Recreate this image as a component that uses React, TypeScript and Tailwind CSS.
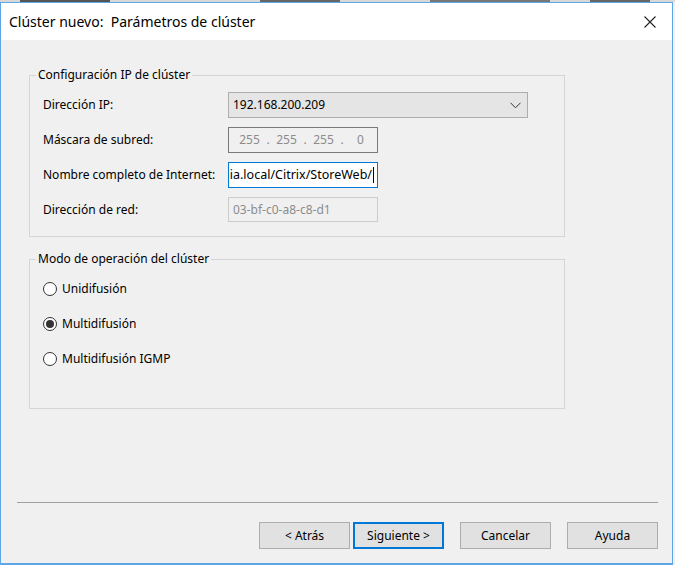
import React from 'react';

const FONT = { fontFamily: '"Noto Sans", "Open Sans", sans-serif' };

const Radio = ({ checked, label }: { checked?: boolean; label: string }) => (
  <div className="flex h-[20px] items-center gap-[5px]">
    <span className="flex h-[14px] w-[14px] items-center justify-center rounded-full border border-[#333333] bg-white">
      {checked && <span className="h-[8px] w-[8px] rounded-full bg-[#333333]" />}
    </span>
    <span>{label}</span>
  </div>
);

const Button = ({ label, primary }: { label: string; primary?: boolean }) => (
  <button
    className={
      'h-[27px] w-[91px] bg-[#e1e1e1] text-[12px] text-black ' +
      (primary ? 'border-2 border-[#0078d7]' : 'border border-[#adadad]')
    }
  >
    {label}
  </button>
);

const Octet = ({ v }: { v: string }) => <span className="w-[29px] text-center">{v}</span>;
const Dot = () => <span className="w-[8px] text-center">.</span>;

export default function App() {
  return (
    <div className="flex h-[565px] w-[675px] flex-col overflow-hidden bg-[#f0f0f0] text-[12px] text-black" style={FONT}>
      {/* stuff behind the window */}
      <div className="flex h-[2px] shrink-0 bg-[#d8d8d8]">
        <div className="ml-[20px] w-[90px] bg-[#555]" />
        <div className="ml-[150px] w-[80px] bg-[#666]" />
        <div className="ml-[90px] w-[120px] bg-[#777]" />
        <div className="ml-[40px] w-[60px] bg-[#666]" />
      </div>
      <div className="mr-[2px] flex flex-1 flex-col border border-b-2 border-[#5ea6e6]">
        {/* title bar */}
        <div className="flex h-[37px] shrink-0 items-center justify-between bg-white pl-[8px] pr-[10px] text-[14px]">
          <span>Clúster nuevo:&nbsp; Parámetros de clúster</span>
          <svg width="14" height="14" viewBox="0 0 14 14" className="mr-[5px]">
            <path d="M1.5 1.5 L12.5 12.5 M12.5 1.5 L1.5 12.5" stroke="#222" strokeWidth="1.1" fill="none" />
          </svg>
        </div>

        {/* body */}
        <div className="flex flex-1 flex-col px-[28px] pt-[27px]">
          <fieldset className="w-[536px] border border-[#d5d5d5] pb-[14px]">
            <legend className="ml-[6px] px-[2px] leading-[16px]">Configuración IP de clúster</legend>
            <div className="mt-[9px] flex flex-col gap-[9px] pl-[13px]">
              <div className="flex h-[26px] items-center">
                <span className="w-[185px]">Dirección IP:</span>
                <div className="flex h-[26px] w-[300px] items-center justify-between border border-[#adadad] bg-[#e5e5e5] pl-[4px] pr-[6px]">
                  <span>192.168.200.209</span>
                  <svg width="11" height="7" viewBox="0 0 11 7">
                    <path d="M0.5 0.8 L5.5 5.8 L10.5 0.8" stroke="#333" strokeWidth="1" fill="none" />
                  </svg>
                </div>
              </div>
              <div className="flex h-[26px] items-center">
                <span className="w-[185px]">Máscara de subred:</span>
                <div className="flex h-[26px] w-[150px] items-center border border-[#7a7a7a] bg-[#f0f0f0] pl-[6px] text-[#8c8c8c]">
                  <Octet v="255" />
                  <Dot />
                  <Octet v="255" />
                  <Dot />
                  <Octet v="255" />
                  <Dot />
                  <Octet v="0" />
                </div>
              </div>
              <div className="flex h-[26px] items-center">
                <span className="w-[185px]">Nombre completo de Internet:</span>
                <div className="flex h-[26px] w-[150px] items-center justify-end overflow-hidden whitespace-nowrap border border-[#0078d7] bg-white pr-[3px] text-[12.5px]">
                  <span>storefront.dominia.local/Citrix/StoreWeb/</span>
                  <span className="ml-[1px] h-[16px] w-[1px] shrink-0 bg-black" />
                </div>
              </div>
              <div className="flex h-[25px] items-center">
                <span className="w-[185px]">Dirección de red:</span>
                <div className="flex h-[25px] w-[150px] items-center border border-[#cccccc] bg-[#f0f0f0] pl-[4px] text-[#8c8c8c]">
                  <span>03-bf-c0-a8-c8-d1</span>
                </div>
              </div>
            </div>
          </fieldset>

          <fieldset className="mt-[14px] h-[158px] w-[536px] border border-[#d5d5d5]">
            <legend className="ml-[6px] px-[2px] leading-[16px]">Modo de operación del clúster</legend>
            <div className="mt-[12px] flex flex-col gap-[15px] pl-[13px]">
              <Radio label="Unidifusión" />
              <Radio checked label="Multidifusión" />
              <Radio label="Multidifusión IGMP" />
            </div>
          </fieldset>

          <div className="flex-1" />
        </div>

        <div className="ml-[16px] mr-[14px] h-[1px] shrink-0 bg-[#a0a0a0]" />
        <div className="flex h-[60px] shrink-0 items-start gap-[3px] pl-[258px] pt-[19px]">
          <Button label="< Atrás" />
          <Button primary label="Siguiente >" />
          <div className="w-[10px]" />
          <Button label="Cancelar" />
          <div className="w-[10px]" />
          <Button label="Ayuda" />
        </div>
      </div>
    </div>
  );
}
